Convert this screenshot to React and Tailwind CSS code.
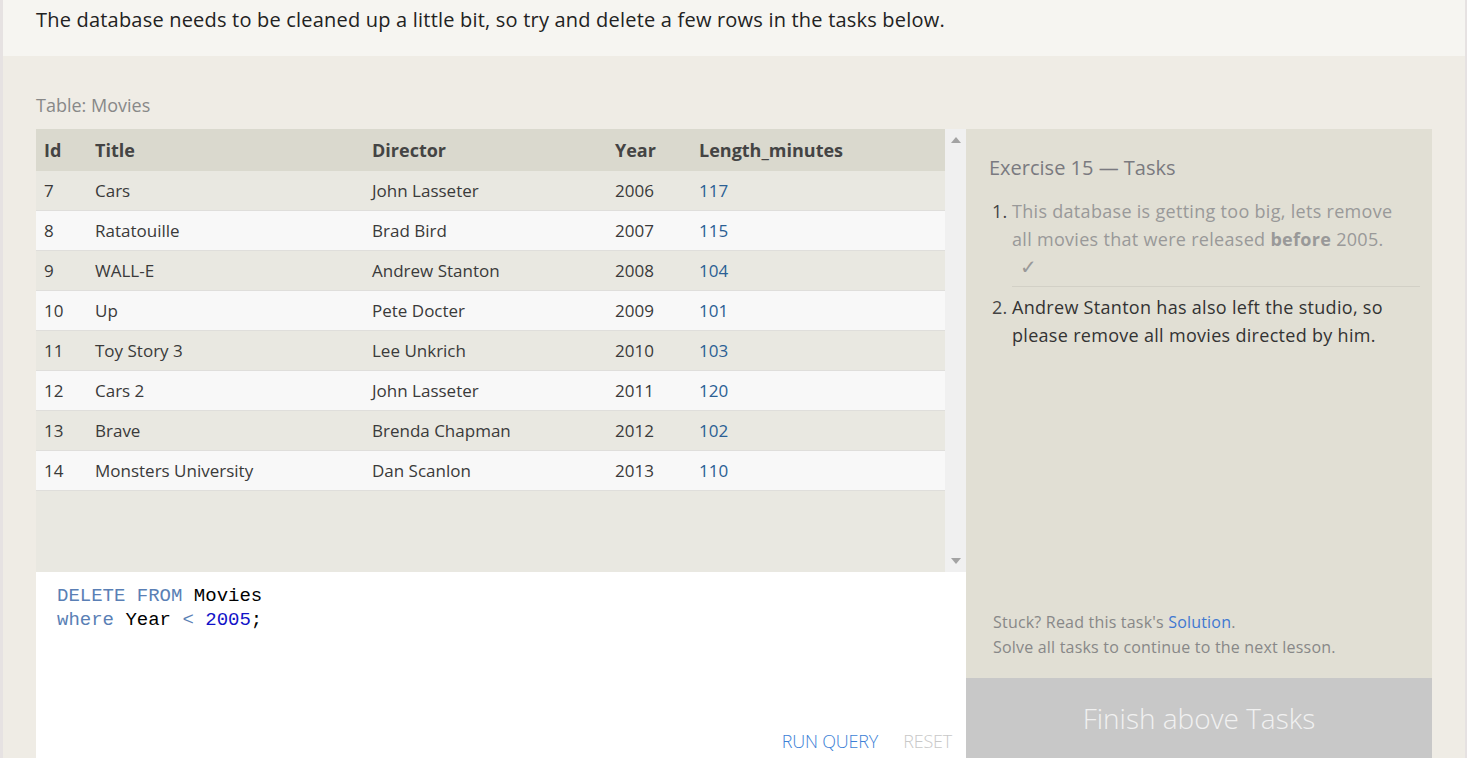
import React from "react";

const movies = [
  [7, "Cars", "John Lasseter", 2006, 117],
  [8, "Ratatouille", "Brad Bird", 2007, 115],
  [9, "WALL-E", "Andrew Stanton", 2008, 104],
  [10, "Up", "Pete Docter", 2009, 101],
  [11, "Toy Story 3", "Lee Unkrich", 2010, 103],
  [12, "Cars 2", "John Lasseter", 2011, 120],
  [13, "Brave", "Brenda Chapman", 2012, 102],
  [14, "Monsters University", "Dan Scanlon", 2013, 110],
];

const cols = "grid grid-cols-[51px_277px_243px_84px_1fr]";

const App = () => {
  return (
    <div className="w-[1467px] h-[758px] overflow-hidden flex bg-[#e6e2e2] text-[#333] font-['Open_Sans','Liberation_Sans',sans-serif]">
      <div className="w-[3px] shrink-0" />
      <div className="flex-1 flex flex-col mr-[2px]">
        {/* Intro */}
        <div className="h-[56px] shrink-0 bg-[#f6f5f1] px-[33px] pt-[7px]">
          <p className="text-[20px] leading-[26px] tracking-[0.2px] text-[#222]">
            The database needs to be cleaned up a little bit, so try and delete a few rows in the tasks below.
          </p>
        </div>

        {/* Exercise */}
        <div className="flex-1 bg-[#efece5] px-[33px] pt-[36px]">
          <p className="text-[18px] leading-[26px] text-[#888] mb-[11px]">Table: Movies</p>

          <div className="flex">
            <div className="w-[930px] flex flex-col">
              {/* Table */}
              <div className="h-[443px] flex bg-[#e9e8e1]">
                <div className="flex-1">
                  <div className={`${cols} h-[42px] pt-[1px] items-center bg-[#dad9ce] text-[18px] font-bold text-[#444]`}>
                    {["Id", "Title", "Director", "Year", "Length_minutes"].map((h) => (
                      <div key={h} className="px-[8px]">{h}</div>
                    ))}
                  </div>
                  {movies.map((m, i) => (
                    <div
                      key={m[0]}
                      className={`${cols} h-[40px] pt-[1px] items-center text-[17px] text-[#3a3a3a] border-b border-[#dfdedb] ${i % 2 ? "bg-[#f8f8f8]" : "bg-[#e9e8e1]"}`}
                    >
                      <div className="px-[8px]">{m[0]}</div>
                      <div className="px-[8px]">{m[1]}</div>
                      <div className="px-[8px]">{m[2]}</div>
                      <div className="px-[8px]">{m[3]}</div>
                      <div className="px-[8px] text-[#2b5f94]">{m[4]}</div>
                    </div>
                  ))}
                </div>
                <div className="w-[21px] bg-[#f0f0f0] flex flex-col justify-between items-center py-[8px]">
                  <svg width="10" height="6" viewBox="0 0 10 6"><path d="M5 0 L10 6 L0 6 Z" fill="#a3a3a3" /></svg>
                  <svg width="10" height="6" viewBox="0 0 10 6"><path d="M0 0 L10 0 L5 6 Z" fill="#a3a3a3" /></svg>
                </div>
              </div>

              {/* Editor */}
              <div className="h-[186px] bg-white flex flex-col justify-between pl-[21px] pr-[14px] pt-[12px] pb-[4px]">
                <pre className="font-['Liberation_Mono',monospace] text-[19px] leading-[24px] text-black">
                  <span className="text-[#5a7fb5]">DELETE FROM</span> Movies{"\n"}
                  <span className="text-[#5a7fb5]">where</span> Year <span className="text-[#5a7fb5]">&lt;</span>{" "}
                  <span className="text-[#1212c8]">2005</span>;
                </pre>
                <div className="flex justify-end gap-[25px] text-[18px] font-light leading-[26px] tracking-[-0.2px]">
                  <span className="text-[#3d7fd6]">RUN QUERY</span>
                  <span className="text-[#c8c8c8]">RESET</span>
                </div>
              </div>
            </div>

            {/* Tasks */}
            <div className="w-[466px] flex flex-col">
              <div className="h-[549px] bg-[#e1dfd4] pl-[23px] pr-[12px] pt-[24px] flex flex-col justify-between pb-[18px]">
                <div>
                  <h3 className="text-[20px] leading-[30px] text-[#7a7a80]">Exercise 15 — Tasks</h3>
                  <ol className="mt-[14px] text-[18px] leading-[28px] tracking-[0.3px]">
                    <li className="flex ml-[3px]">
                      <span className="w-[20px] shrink-0 text-[#444]">1.</span>
                      <div className="flex-1 text-[#999] border-b border-[#d2d0c6] pb-[5px]">
                        <p className="pr-[16px]">
                          This database is getting too big, lets remove all movies that were released{" "}
                          <span className="font-bold">before</span> 2005.
                        </p>
                        <p className="pl-[8px] text-[20px] font-light">✓</p>
                      </div>
                    </li>
                    <li className="flex ml-[3px] mt-[6px]">
                      <span className="w-[20px] shrink-0 text-[#444]">2.</span>
                      <p className="flex-1 text-[#333]">
                        Andrew Stanton has also left the studio, so please remove all movies directed by him.
                      </p>
                    </li>
                  </ol>
                </div>
                <div className="text-[16px] leading-[25px] tracking-[0.2px] text-[#888] pl-[4px]">
                  <p>Stuck? Read this task's <span className="text-[#3f78d1]">Solution</span>.</p>
                  <p>Solve all tasks to continue to the next lesson.</p>
                </div>
              </div>
              <div className="h-[80px] bg-[#c8c8c8] flex items-center justify-center text-[28px] font-light text-[#f1f1f1]">
                Finish above Tasks
              </div>
            </div>
          </div>
        </div>
      </div>
    </div>
  );
};

export default App;
